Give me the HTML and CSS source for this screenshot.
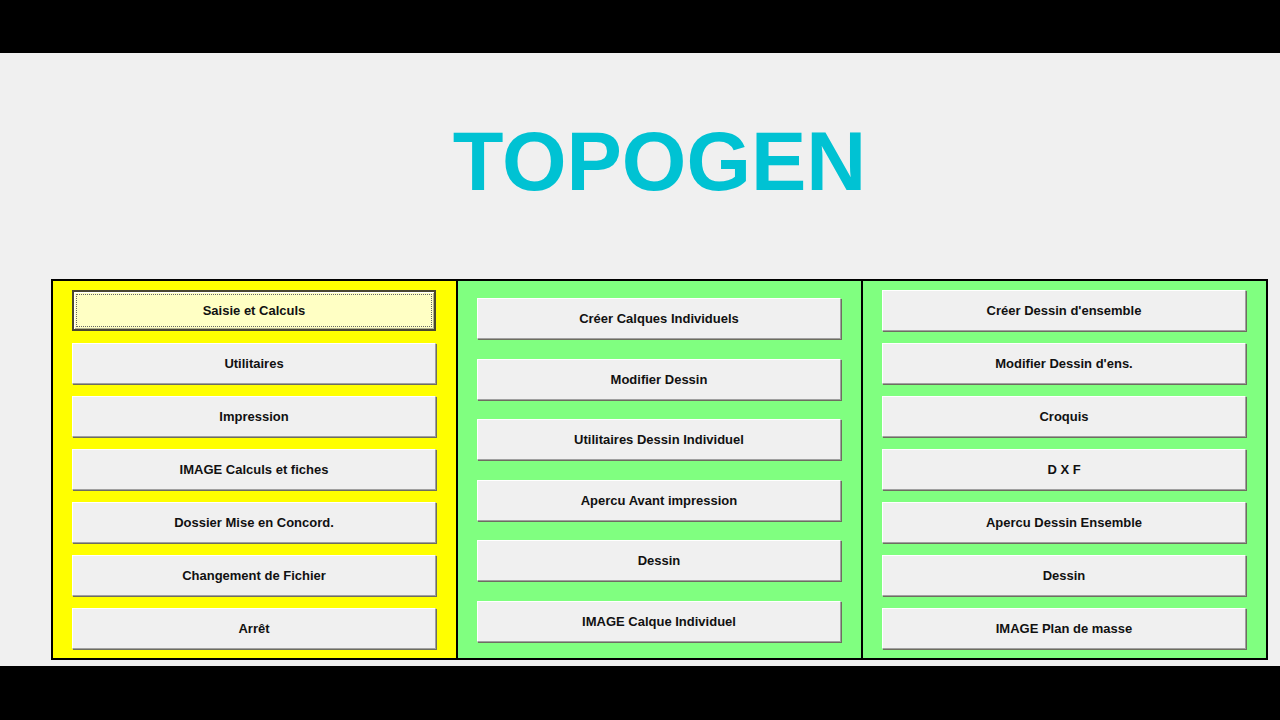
FILE: index.html
```html
<!DOCTYPE html>
<html lang="fr">
<head>
<meta charset="utf-8">
<title>TOPOGEN</title>
<link rel="stylesheet" href="styles.css">
</head>
<body>
<div class="bar bar-top"></div>
<main class="screen">
  <h1 class="title">TOPOGEN</h1>
  <div class="frame">
    <section class="panel panel-yellow">
      <button class="btn btn-focus"><span class="focus">Saisie et Calculs</span></button>
      <button class="btn">Utilitaires</button>
      <button class="btn">Impression</button>
      <button class="btn">IMAGE Calculs et fiches</button>
      <button class="btn">Dossier Mise en Concord.</button>
      <button class="btn">Changement de Fichier</button>
      <button class="btn">Arrêt</button>
    </section>
    <section class="panel panel-green panel-six">
      <button class="btn">Créer Calques Individuels</button>
      <button class="btn">Modifier Dessin</button>
      <button class="btn">Utilitaires Dessin Individuel</button>
      <button class="btn">Apercu Avant impression</button>
      <button class="btn">Dessin</button>
      <button class="btn">IMAGE Calque Individuel</button>
    </section>
    <section class="panel panel-green">
      <button class="btn">Créer Dessin d'ensemble</button>
      <button class="btn">Modifier Dessin d'ens.</button>
      <button class="btn">Croquis</button>
      <button class="btn">D X F</button>
      <button class="btn">Apercu Dessin Ensemble</button>
      <button class="btn">Dessin</button>
      <button class="btn">IMAGE Plan de masse</button>
    </section>
  </div>
</main>
<div class="bar bar-bottom"></div>
</body>
</html>
```
FILE: styles.css
```css
* { box-sizing: border-box; }
html, body { margin: 0; padding: 0; }
body {
  width: 1280px;
  height: 720px;
  overflow: hidden;
  background: #000;
  font-family: "Liberation Sans", Arial, sans-serif;
}
.bar { background: #000; }
.bar-top { height: 53px; }
.bar-bottom { height: 54px; }
.screen {
  height: 613px;
  background: #f0f0f0;
  display: flex;
  flex-direction: column;
  padding-top: 67px;
}
.title {
  margin: 0 0 76px 51px;
  width: 1217px;
  height: 83px;
  font-size: 83px;
  line-height: 83px;
  font-weight: bold;
  text-align: center;
  color: #00c2d3;
}
.frame {
  margin-left: 51px;
  width: 1217px;
  height: 381px;
  border: 2px solid #000;
  background: #000;
  display: grid;
  grid-template-columns: 403px 403px 403px;
  column-gap: 2px;
}
.panel {
  display: flex;
  flex-direction: column;
  justify-content: space-between;
  padding: 9px 19px;
}
.panel-six {
  padding: 17px 19px 16px;
}
.panel-yellow { background: #ffff00; }
.panel-green { background: #80ff80; }
.btn {
  height: 41px;
  width: 364px;
  margin: 0;
  padding: 0;
  background: #f0f0f0;
  border-top: 1px solid #ffffff;
  border-left: 1px solid #ffffff;
  border-right: 1px solid #a0a0a0;
  border-bottom: 1px solid #a0a0a0;
  box-shadow: 1px 1px 0 #6e6e60;
  font-family: "Liberation Sans", Arial, sans-serif;
  font-size: 13px;
  font-weight: bold;
  color: #111;
  text-align: center;
}
.btn-focus {
  background: #ffffc4;
  border: 2px solid #4a4630;
  box-shadow: inset 1px 1px 0 #fff, inset -1px -1px 0 #b0b090;
  padding: 2px;
  display: flex;
}
.focus {
  flex: 1;
  display: flex;
  align-items: center;
  justify-content: center;
  border: 1px dotted #666;
}
```
